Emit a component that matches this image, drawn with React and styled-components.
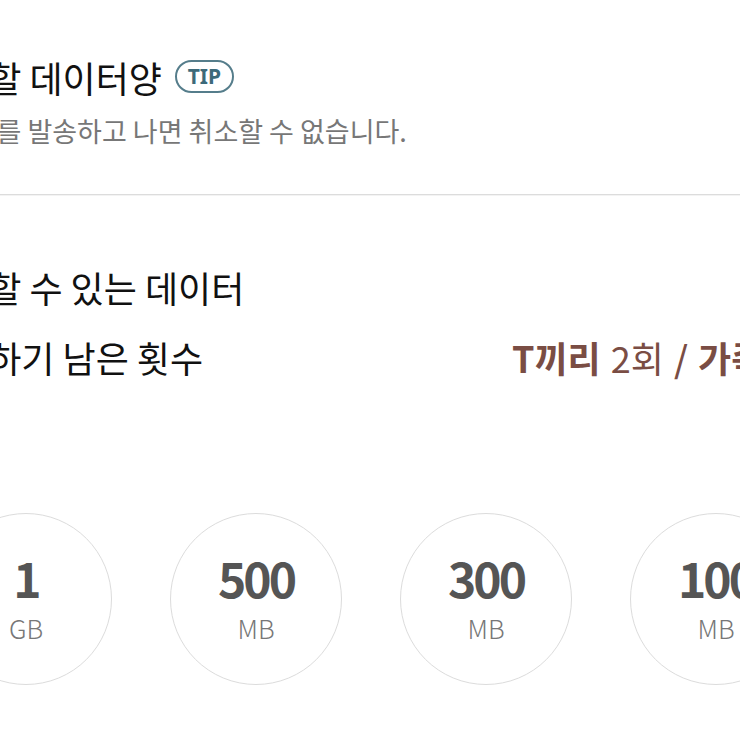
import React from 'react'
import styled, { createGlobalStyle } from 'styled-components';

const GlobalStyle = createGlobalStyle`
  body {
    margin: 0;
    background: #ffffff;
    font-family: "Noto Sans CJK KR", "Noto Sans", sans-serif;
    overflow: hidden;
  }
`;

const Page = styled.div`
  width: 740px;
  height: 740px;
  overflow: hidden;
  background: #fff;
`;

const Content = styled.div`
  width: 1000px;
  margin-left: -78px;
`;

const Header = styled.section`
  padding-top: 53px;
`;

const TitleRow = styled.div`
  display: flex;
  align-items: center;
  gap: 13px;
`;

const Title = styled.h2`
  margin: 0;
  font-size: 36px;
  line-height: 48px;
  font-weight: 400;
  color: #111;
`;

const TipBadge = styled.span`
  display: inline-flex;
  align-items: center;
  justify-content: center;
  width: 55px;
  height: 29px;
  border: 2px solid #557d8b;
  border-radius: 17px;
  font-family: "Noto Sans", sans-serif;
  font-size: 21px;
  font-weight: 700;
  color: #3d6a7a;
  margin-top: -2px;
`;

const Notice = styled.p`
  margin: 11px 0 0;
  font-size: 27px;
  line-height: 38px;
  color: #777;
`;

const Divider = styled.hr`
  margin: 44px 0 0;
  border: none;
  border-top: 1px solid #dcdcdc;
  border-bottom: 1px solid #f3f3f3;
`;

const InfoList = styled.section`
  display: flex;
  flex-direction: column;
  gap: 22px;
  padding-top: 67px;
`;

const InfoRow = styled.div`
  display: grid;
  grid-template-columns: 590px auto;
  align-items: center;
`;

const Label = styled.span`
  font-size: 36px;
  line-height: 48px;
  color: #111;
`;

const Value = styled.span`
  font-size: 36px;
  line-height: 48px;
  color: #7a4d44;
  white-space: nowrap;
  word-spacing: 2px;
`;

const Strong = styled.b`
  font-weight: ${p => (p.$light ? 500 : 700)};
`;

const AmountRow = styled.div`
  display: flex;
  gap: 58px;
  margin-top: 132px;
  margin-left: 18px;
`;

const Amount = styled.button`
  flex: none;
  width: 172px;
  height: 172px;
  border-radius: 50%;
  border: 1.5px solid #dcdcdc;
  background: #fff;
  display: flex;
  flex-direction: column;
  align-items: center;
  justify-content: center;
  padding: 0 0 4px;
  font-family: inherit;
`;

const Size = styled.span`
  font-size: 48px;
  line-height: 48px;
  font-weight: 700;
  color: #555;
  letter-spacing: -3px;
`;

const Unit = styled.span`
  margin-top: 14px;
  font-size: 26px;
  line-height: 26px;
  font-weight: 300;
  color: #777;
`;

const amounts = [
  { size: '1', unit: 'GB' },
  { size: '500', unit: 'MB' },
  { size: '300', unit: 'MB' },
  { size: '100', unit: 'MB' },
];

const App = () => {
  return (
    <Page>
      <GlobalStyle />
      <Content>
        <Header>
          <TitleRow>
            <Title>선물할 데이터양</Title>
            <TipBadge>TIP</TipBadge>
          </TitleRow>
          <Notice>데이터를 발송하고 나면 취소할 수 없습니다.</Notice>
        </Header>
        <Divider />
        <InfoList>
          <InfoRow>
            <Label>선물할 수 있는 데이터</Label>
          </InfoRow>
          <InfoRow>
            <Label>선물하기 남은 횟수</Label>
            <Value>
              <Strong>T끼리</Strong> 2회 <Strong $light>/</Strong> <Strong>가족</Strong> 1회
            </Value>
          </InfoRow>
        </InfoList>
        <AmountRow>
          {amounts.map(a => (
            <Amount key={a.size}>
              <Size>{a.size}</Size>
              <Unit>{a.unit}</Unit>
            </Amount>
          ))}
        </AmountRow>
      </Content>
    </Page>
  );
};

export default App;
